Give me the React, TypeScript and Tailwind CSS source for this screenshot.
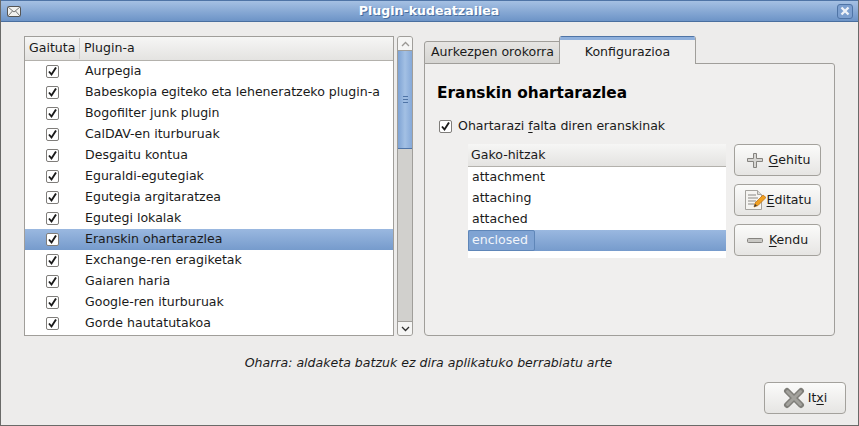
import React from 'react';

const plugins = [
  'Aurpegia',
  'Babeskopia egiteko eta leheneratzeko plugin-a',
  'Bogofilter junk plugin',
  'CalDAV-en iturburuak',
  'Desgaitu kontua',
  'Eguraldi-egutegiak',
  'Egutegia argitaratzea',
  'Egutegi lokalak',
  'Eranskin ohartarazlea',
  'Exchange-ren eragiketak',
  'Gaiaren haria',
  'Google-ren iturburuak',
  'Gorde hautatutakoa',
];

const keywords = ['attachment', 'attaching', 'attached'];

const CheckBox = () => (
  <span className="flex h-[13px] w-[13px] items-center justify-center rounded-[2px] border border-[#7f7d7a] bg-white">
    <svg width="11" height="11" viewBox="0 0 11 11">
      <path d="M2 5.500 L4.500 8.500 L9 1.500" fill="none" stroke="#1a1a1a" strokeWidth="1.900" />
    </svg>
  </span>
);

const PlusIcon = () => (
  <svg width="17" height="17" viewBox="0 0 17 17">
    <path d="M6.500 1.500h3v5h6v3h-6v6h-3v-6h-6v-3h6z" fill="#d6d5d2" stroke="#85837f" />
  </svg>
);

const MinusIcon = () => (
  <svg width="17" height="17" viewBox="0 0 17 17">
    <rect x="0.500" y="6.500" width="15" height="4" rx="1" fill="#c9c8c4" stroke="#85837f" />
  </svg>
);

const NoteIcon = () => (
  <svg width="22" height="22" viewBox="0 0 22 22">
    <path d="M1.500 1.500h12l4 4v15h-16z" fill="#f5f4f1" stroke="#a5a39e" />
    <path d="M13.500 1.500v4h4" fill="#dcdad5" stroke="#a5a39e" />
    <path d="M4 6h8M4 9h10M4 12h8M4 15h6" stroke="#8b8985" strokeWidth="1" />
    <path d="M10 18l1-4 8-8 3 2.500-8 8z" fill="#f0a020" stroke="#b86a10" strokeWidth="0.700" />
    <path d="M10 18l1-3 2 1.500z" fill="#3a3a3a" />
  </svg>
);

const CloseIcon = () => (
  <svg width="22" height="22" viewBox="0 0 22 22">
    <path d="M4 4L18 18M18 4L4 18" stroke="#7f7e79" strokeWidth="6" strokeLinecap="round" />
    <path d="M4.500 4.500L17.500 17.500M17.500 4.500L4.500 17.500" stroke="#a3a29d" strokeWidth="3" strokeLinecap="round" />
  </svg>
);

const DialogButton = ({ icon, className, children }: { icon: React.ReactNode; className: string; children: React.ReactNode }) => (
  <button className={`flex items-center justify-center rounded-[4px] border border-[#a3a19c] bg-gradient-to-b from-[#fbfbfa] to-[#e6e5e3] text-[12.55px] text-[#1a1a1a] ${className}`}>
    {icon}
    {children}
  </button>
);

export default function App() {
  return (
    <div
      className="flex h-[426px] w-[859px] flex-col overflow-hidden border-x border-b border-[#6a6a68] bg-[#edeceb] text-[12.55px] text-[#1a1a1a]"
      style={{ fontFamily: '"DejaVu Sans", sans-serif' }}
    >
      {/* title bar */}
      <div className="flex h-[22px] shrink-0 items-center justify-between border-t border-b border-t-[#4f74a6] border-b-[#4a6f9f] bg-gradient-to-b from-[#a5c0e3] to-[#6d94c7] pl-[6px] pr-[5px]">
        <svg width="14" height="11" viewBox="0 0 14 11">
          <rect x="0.500" y="0.500" width="13" height="10" rx="1" fill="#f1f1ef" stroke="#555" />
          <path d="M1 1l6 5 6-5M1 10l4.500-5M13 10L8.500 5" fill="none" stroke="#777" />
        </svg>
        <span className="font-bold text-white [text-shadow:1px_1px_0_#4a6f9f]">Plugin-kudeatzailea</span>
        <span className="flex h-[15px] w-[16px] items-center justify-center rounded-[3px] border border-[#4f74a6] bg-[#7c9fcf]">
          <svg width="10" height="10" viewBox="0 0 10 10">
            <path d="M1.500 1.500L8.500 8.500M8.500 1.500L1.500 8.500" stroke="#eef2f8" strokeWidth="2.400" />
          </svg>
        </span>
      </div>

      {/* main area */}
      <div className="flex flex-1 flex-col pl-[23px] pr-[12px] pt-[14px]">
        <div className="flex h-[300px]">
          {/* plugin list */}
          <div className="h-full w-[370px] overflow-hidden border border-[#a09e9a] bg-white">
            <div className="flex h-[24px] border-b border-[#b3b1ac] bg-gradient-to-b from-[#f6f6f5] to-[#e4e3e1]">
              <div className="my-[1px] flex w-[55px] items-center border-r border-[#cfcdc9] pl-[4px]">Gaituta</div>
              <div className="flex items-center pl-[4px]">Plugin-a</div>
            </div>
            {plugins.map((name) => {
              const selected = name === 'Eranskin ohartarazlea';
              return (
                <div
                  key={name}
                  className={`flex h-[21px] items-center ${selected ? 'bg-gradient-to-b from-[#9ab8e0] to-[#769bcc] text-[#1a1a1a]' : ''}`}
                >
                  <div className="flex w-[55px] justify-center">
                    <CheckBox />
                  </div>
                  <span className="pl-[5px]">{name}</span>
                </div>
              );
            })}
          </div>

          {/* scrollbar */}
          <div className="ml-[3px] flex h-full w-[16px] flex-col overflow-hidden rounded-[3px] border border-[#a09e9a] bg-[#d1d0cd]">
            <div className="flex h-[14px] items-center justify-center border-b border-[#a09e9a] bg-[#f5f5f4]">
              <svg width="9" height="6" viewBox="0 0 9 6">
                <path d="M1 5l3.500-3.500L8 5" fill="none" stroke="#9a9894" strokeWidth="1.300" />
              </svg>
            </div>
            <div className="flex h-[98px] flex-col items-center justify-center gap-[2px] border-b border-[#4f74a6] bg-gradient-to-r from-[#7ea3d4] via-[#a3c0e4] to-[#86a9d8]">
              <span className="h-px w-[5px] bg-[#4f74a6]" />
              <span className="h-px w-[5px] bg-[#4f74a6]" />
              <span className="h-px w-[5px] bg-[#4f74a6]" />
            </div>
            <div className="flex-1" />
            <div className="flex h-[14px] items-center justify-center border-t border-[#a09e9a] bg-[#f5f5f4]">
              <svg width="9" height="6" viewBox="0 0 9 6">
                <path d="M1 1l3.500 3.500L8 1" fill="none" stroke="#2e2e2e" strokeWidth="1.300" />
              </svg>
            </div>
          </div>

          {/* notebook */}
          <div className="ml-[11px] flex h-full w-[411px] flex-col">
            <div className="z-10 -mb-px flex h-[28px] items-end">
              <div className="flex h-[23px] w-[136px] items-center rounded-tl-[3px] border border-[#a09e9a] bg-gradient-to-b from-[#e6e5e3] to-[#d6d5d2] pl-[6px]">
                Aurkezpen orokorra
              </div>
              <div className="-ml-px flex h-[28px] w-[137px] flex-col overflow-hidden rounded-t-[3px] border-x border-[#a09e9a] bg-[#f0efee]">
                <div className="h-[4px] shrink-0 border-t border-[#4f74a6] bg-[#8fb0dc]" />
                <div className="flex flex-1 justify-center pt-[3px]">Konfigurazioa</div>
              </div>
            </div>
            <div className="flex flex-1 flex-col rounded-b-[4px] rounded-tr-[3px] border border-[#a09e9a] bg-[#f0efee] pl-[12px] pr-[12px] pt-[17px]">
              <h2 className="text-[15.35px] font-bold leading-[24px] text-black">Eranskin ohartarazlea</h2>
              <label className="mt-[13px] flex h-[17px] items-center gap-[6px] pl-[2px]">
                <CheckBox />
                <span>
                  Ohartarazi <span className="underline underline-offset-2">f</span>alta diren eranskinak
                </span>
              </label>
              <div className="mt-[9px] flex pl-[31px]">
                <div className="h-[114px] w-[258px] bg-white">
                  <div className="flex h-[23px] items-center border-b border-[#b3b1ac] bg-gradient-to-b from-[#f6f6f5] to-[#e4e3e1] pl-[3px]">
                    Gako-hitzak
                  </div>
                  {keywords.map((word) => (
                    <div key={word} className="flex h-[21px] items-center pl-[4px]">
                      {word}
                    </div>
                  ))}
                  <div className="h-[21px] bg-gradient-to-b from-[#9ab8e0] to-[#769bcc]">
                    <span className="flex h-full w-[67px] items-center rounded-[2px] border border-[#5f86b8] bg-[#7fa3d3] pl-[3px] text-[#f2f5fa]">
                      enclosed
                    </span>
                  </div>
                </div>
                <div className="ml-[8px] flex w-[87px] flex-col gap-[8px]">
                  <DialogButton icon={<PlusIcon />} className="h-[32px] gap-[5px] pl-[2px]">
                    <span><span className="underline underline-offset-2">G</span>ehitu</span>
                  </DialogButton>
                  <DialogButton icon={<NoteIcon />} className="h-[32px] gap-[1px]">
                    <span><span className="underline underline-offset-2">E</span>ditatu</span>
                  </DialogButton>
                  <DialogButton icon={<MinusIcon />} className="h-[32px] gap-[5px]">
                    <span><span className="underline underline-offset-2">K</span>endu</span>
                  </DialogButton>
                </div>
              </div>
            </div>
          </div>
        </div>

        <p className="mt-[19px] pr-[13px] text-center italic leading-[16px]">Oharra: aldaketa batzuk ez dira aplikatuko berrabiatu arte</p>

        <div className="mt-[11px] flex justify-end">
          <DialogButton icon={<CloseIcon />} className="h-[32px] w-[82px] gap-[3px]">
            <span>It<span className="underline underline-offset-2">x</span>i</span>
          </DialogButton>
        </div>
      </div>
    </div>
  );
}
